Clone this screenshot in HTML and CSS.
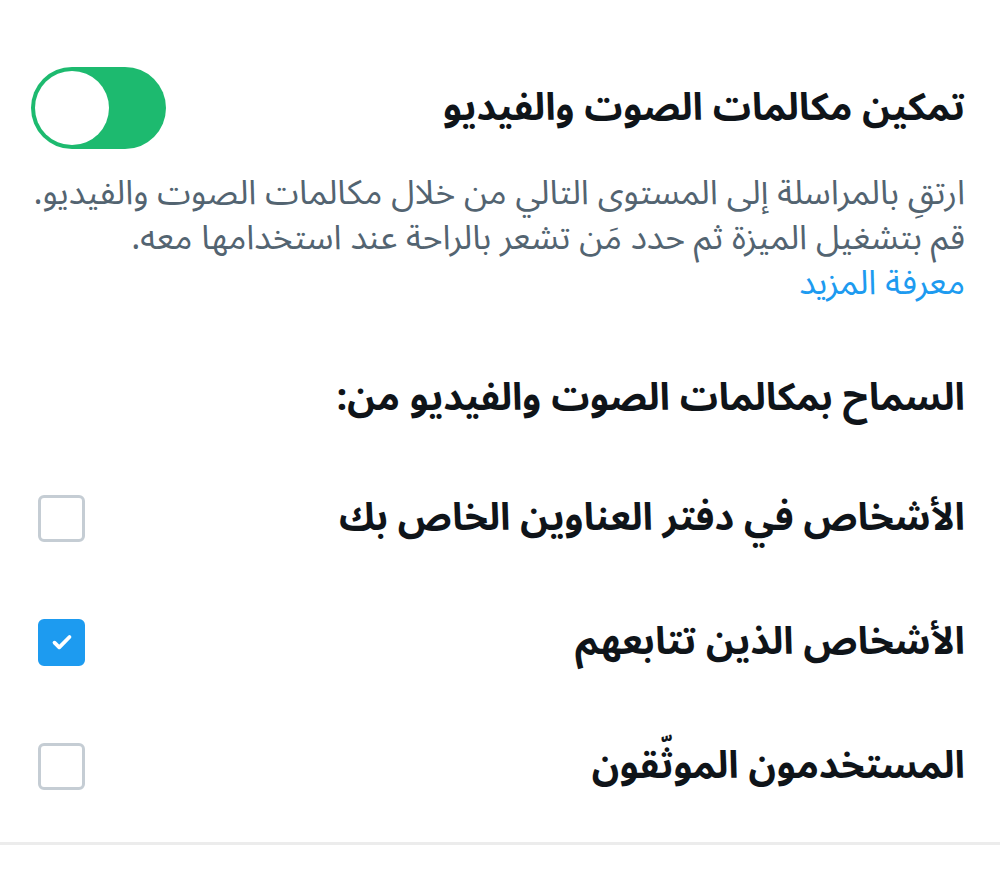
FILE: index.html
```html
<!DOCTYPE html>
<html lang="ar" dir="rtl">
<head>
<meta charset="utf-8">
<link rel="stylesheet" href="styles.css">
</head>
<body>
<main class="page">
  <section class="toggle-section">
    <div class="toggle-row">
      <h1 class="title">تمكين مكالمات الصوت والفيديو</h1>
      <span class="switch"><span class="knob"></span></span>
    </div>
    <p class="desc">ارتقِ بالمراسلة إلى المستوى التالي من خلال مكالمات الصوت والفيديو. قم بتشغيل الميزة ثم حدد مَن تشعر بالراحة عند استخدامها معه. <a class="link" href="#">معرفة المزيد</a></p>
  </section>
  <section class="allow">
    <h2 class="allow-title">السماح بمكالمات الصوت والفيديو من:</h2>
    <div class="option">
      <span class="option-label">الأشخاص في دفتر العناوين الخاص بك</span>
      <span class="box"></span>
    </div>
    <div class="option">
      <span class="option-label">الأشخاص الذين تتابعهم</span>
      <span class="box checked"><svg viewBox="0 0 24 24" width="30" height="30"><path d="M6 12.5l3.8 3.8L18 8" fill="none" stroke="#fff" stroke-width="3" stroke-linecap="round" stroke-linejoin="round"/></svg></span>
    </div>
    <div class="option">
      <span class="option-label">المستخدمون الموثّقون</span>
      <span class="box"></span>
    </div>
  </section>
  <div class="divider"></div>
</main>
</body>
</html>
```
FILE: styles.css
```css
html, body {
  margin: 0;
  padding: 0;
  background: #ffffff;
}
body {
  font-family: "Noto Sans Arabic", "Noto Naskh Arabic", "DejaVu Sans", sans-serif;
  color: #0f1419;
}
.page {
  padding: 67px 35px 0 0;
  width: 1000px;
  box-sizing: border-box;
}
.toggle-row {
  display: flex;
  justify-content: space-between;
  align-items: center;
  padding-left: 31px;
  height: 82px;
}
.title {
  margin: 0;
  font-size: 38px;
  font-weight: 700;
  line-height: 60px;
}
.switch {
  direction: ltr;
  width: 135px;
  height: 82px;
  border-radius: 41px;
  background: #1dba6f;
  display: flex;
  align-items: center;
  padding: 0 4px;
  box-sizing: border-box;
}
.knob {
  width: 74px;
  height: 74px;
  border-radius: 50%;
  background: #ffffff;
}
.desc {
  margin: 22px 0 0 0;
  padding-left: 20px;
  font-size: 34px;
  line-height: 45px;
  color: #536471;
}
.link {
  color: #1d9bf0;
  text-decoration: none;
  display: block;
}
.allow {
  margin-top: 62px;
}
.allow-title {
  margin: 0;
  font-size: 38px;
  font-weight: 700;
  line-height: 60px;
}
.option {
  display: flex;
  justify-content: space-between;
  align-items: center;
  height: 124px;
  padding-left: 38px;
}
.option:first-of-type {
  margin-top: 28px;
}
.option-label {
  font-size: 38px;
  font-weight: 700;
}
.box {
  width: 47px;
  height: 47px;
  box-sizing: border-box;
  border: 3px solid #c5cdd4;
  border-radius: 6px;
  display: flex;
  align-items: center;
  justify-content: center;
}
.box.checked {
  background: #1d9bf0;
  border-color: #1d9bf0;
}
.divider {
  height: 3px;
  background: #ececec;
  margin-right: -35px;
  margin-top: 14px;
}
```
